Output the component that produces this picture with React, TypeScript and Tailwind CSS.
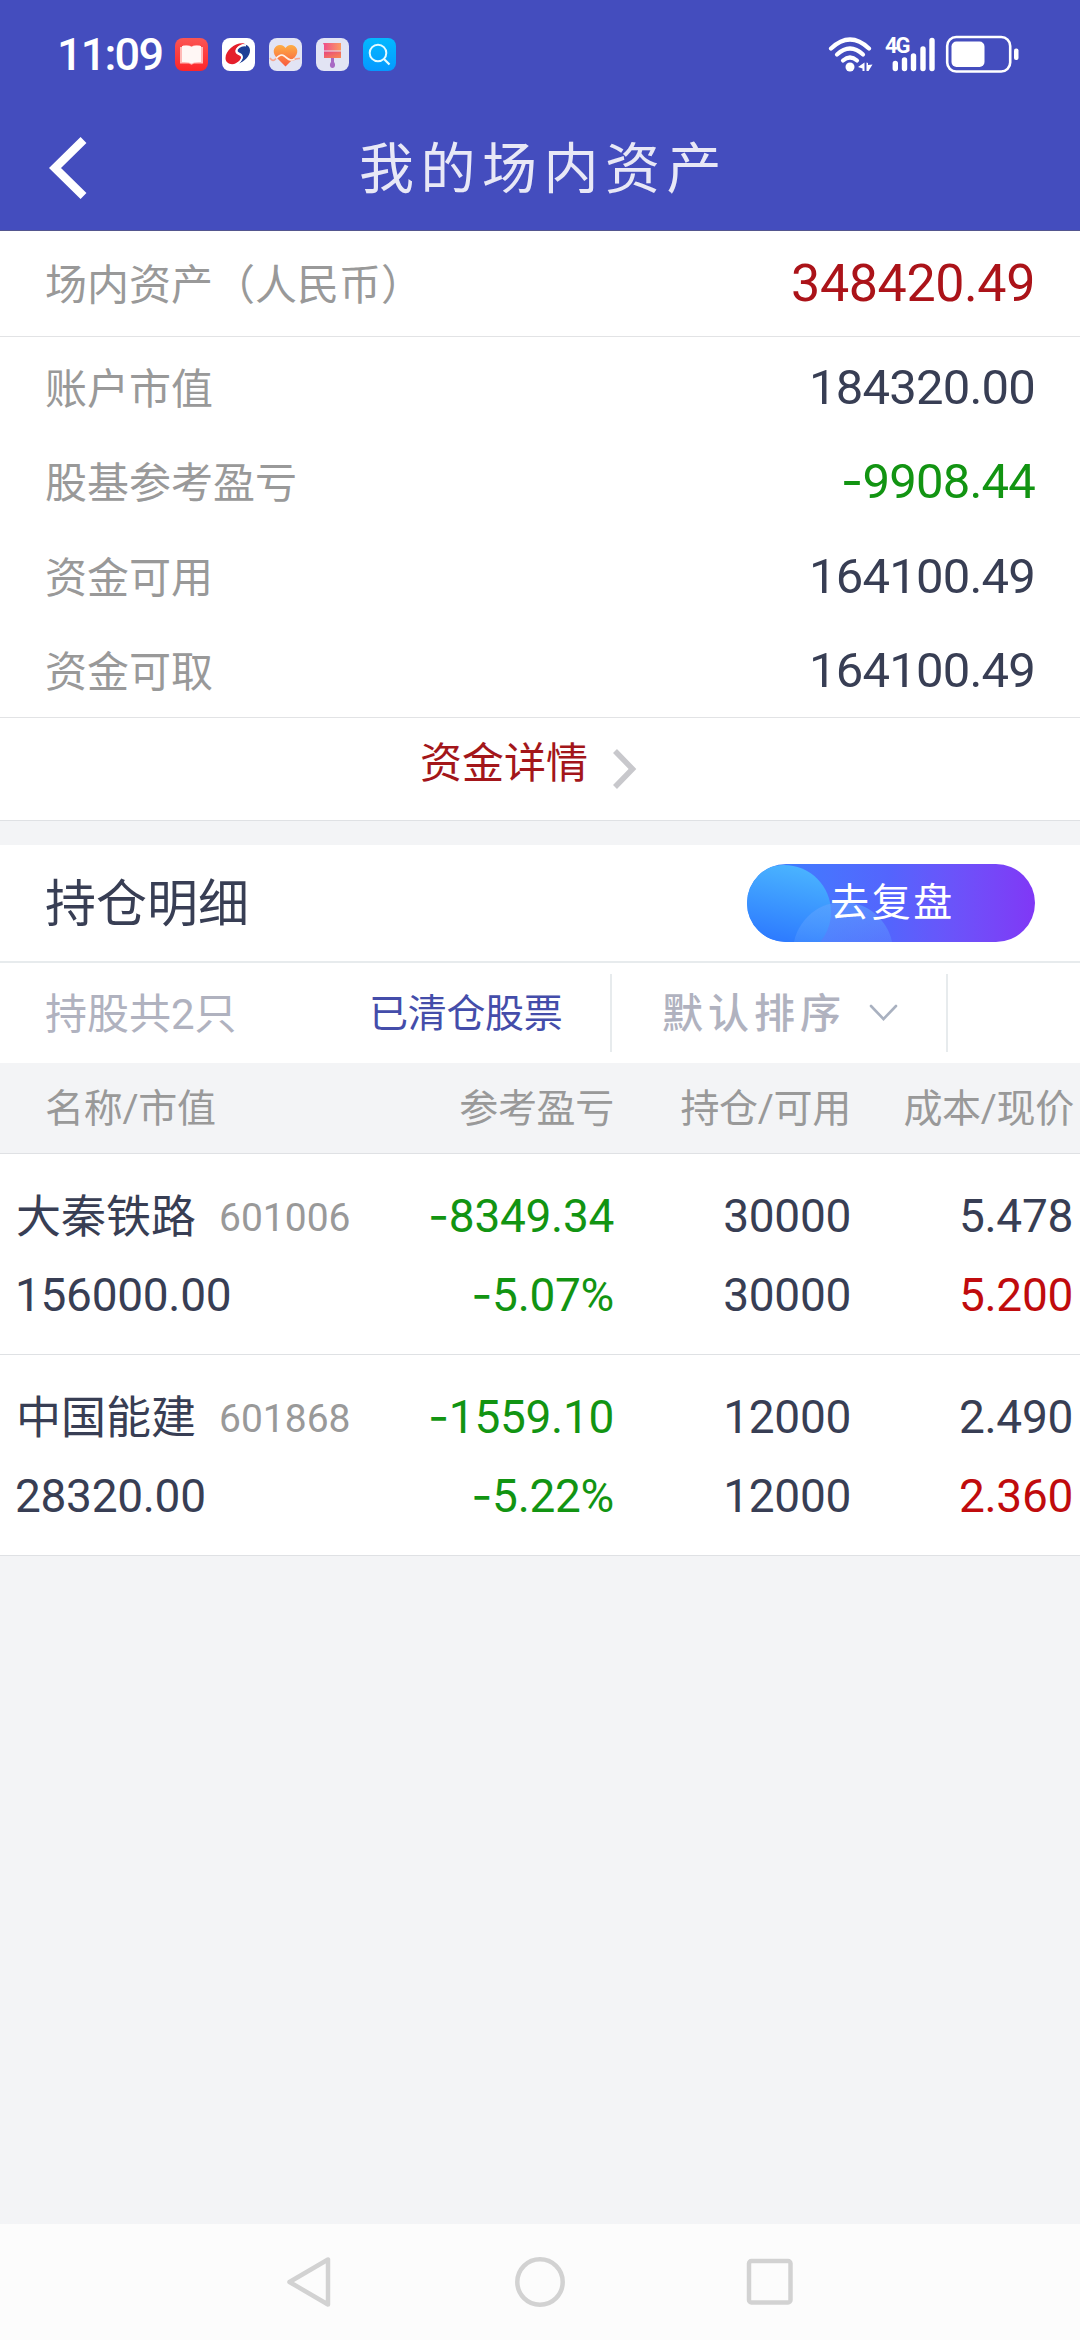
import type { ReactNode } from "react";

const funds = [
  { label: "账户市值", value: "184320.00", color: "text-[#383e54]" },
  { label: "股基参考盈亏", value: "-9908.44", color: "text-[#129412]" },
  { label: "资金可用", value: "164100.49", color: "text-[#383e54]" },
  { label: "资金可取", value: "164100.49", color: "text-[#383e54]" },
];

const stocks = [
  {
    name: "大秦铁路",
    code: "601006",
    marketValue: "156000.00",
    profit: "-8349.34",
    rate: "-5.07%",
    hold: "30000",
    available: "30000",
    cost: "5.478",
    price: "5.200",
  },
  {
    name: "中国能建",
    code: "601868",
    marketValue: "28320.00",
    profit: "-1559.10",
    rate: "-5.22%",
    hold: "12000",
    available: "12000",
    cost: "2.490",
    price: "2.360",
  },
];

// Roboto's hyphen is too short for a minus sign, Inter has a wider one
function Num({ value }: { value: string }) {
  if (!value.startsWith("-")) return <>{value}</>;
  return (
    <>
      <span className="font-['Inter'] leading-none">-</span>
      {value.slice(1)}
    </>
  );
}

function AppIcon({ children }: { children: ReactNode }) {
  return (
    <svg className="size-[33px]" viewBox="0 0 33 33">
      {children}
    </svg>
  );
}

function StatusBar() {
  return (
    <div className="flex h-[108px] items-center pl-[57px] pr-[61px] text-white">
      <span className="w-[118px] text-[45px] leading-none font-medium tracking-[-1.8px]">11:09</span>
      <div className="flex gap-[14px]">
        <AppIcon>
          <defs>
            <linearGradient id="book" x1="0" y1="0" x2="0" y2="1">
              <stop offset="0" stopColor="#fb5553" />
              <stop offset="1" stopColor="#fd2529" />
            </linearGradient>
          </defs>
          <rect width="33" height="33" rx="8" fill="url(#book)" />
          <path d="M5 9h3v-1.500q6-.8 8.500 1q2.500-1.800 8.500-1V9h3v16.500H19l-2.500 1.300-2.500-1.300H5z" fill="#ffb9b6" />
          <path d="M7 8q7-1 9.500 1Q19 7 26 8v16q-7-.5-9.500 1.500Q14 23.500 7 24z" fill="#fff7f5" />
        </AppIcon>
        <AppIcon>
          <rect width="33" height="33" rx="8" fill="#fff" />
          <path d="M23 5.500C14 3.500 3.500 12 3.500 20c0 7 9 8 14 3 3-3 2-5-1-6-4-1.500-4-5-1-8 2-2 4.500-3 7.500-3.500z" fill="#e51f2b" />
          <path d="M17 9c4-4 11-2.500 11 3.500 0 6-6 11-11 13 4-4 5-7.500 1-9.500-4-1.500-4-4.500-1-7z" fill="#1f3f96" />
          <path d="M24 7.500c-6-1-10.500 4-9 6.500 1 2 5 1.500 5 5 0 3-3 6-6 7" fill="none" stroke="#fff" strokeWidth="1.800" />
        </AppIcon>
        <AppIcon>
          <defs>
            <linearGradient id="heart" x1="0" y1="0" x2="0" y2="1">
              <stop offset="0" stopColor="#fdae45" />
              <stop offset="1" stopColor="#f9593f" />
            </linearGradient>
          </defs>
          <rect width="33" height="33" rx="8" fill="#e2e4f4" />
          <path d="M16.500 28.500 7 19C2 13 6 7 11 7c3 0 4.500 1.500 5.500 3C17.500 8.500 19 7 22 7c5 0 9 6 4 12z" fill="url(#heart)" />
          <path d="M1 20c2 3 4 3 5.500 1 3-3 5-5 8-3.500 3 1.500 4 4.500 7.500 4.500 4 0 4-2 9-1.500" fill="none" stroke="#f6a58f" strokeWidth="1.600" />
          <path d="M7 20.500c3-3 5-4.500 7.500-3 3 1.500 4 4.500 7.500 4.500 1.500 0 2.500-.5 3.500-1" fill="none" stroke="#fff1e6" strokeWidth="1.600" />
        </AppIcon>
        <AppIcon>
          <defs>
            <linearGradient id="brush" x1="0" y1="0" x2="1" y2="1">
              <stop offset="0" stopColor="#e8457f" />
              <stop offset="1" stopColor="#f98a4f" />
            </linearGradient>
            <linearGradient id="brushHead" x1="0" y1="0" x2="1" y2="0">
              <stop offset="0" stopColor="#ee4c8c" />
              <stop offset="1" stopColor="#fb9b62" />
            </linearGradient>
          </defs>
          <rect width="33" height="33" rx="8" fill="#e2e4f4" />
          <path d="M7 5h18v7.500H8V7z" fill="url(#brushHead)" />
          <path d="M8 13.500h17V20H8z" fill="url(#brush)" />
          <path d="M15 20h3v4c2 2.500 1 6-1.500 6S13 26.500 15 24z" fill="#a869c4" />
        </AppIcon>
        <AppIcon>
          <defs>
            <linearGradient id="search" x1="0" y1="0" x2="0" y2="1">
              <stop offset="0" stopColor="#03b9ff" />
              <stop offset="1" stopColor="#0599ff" />
            </linearGradient>
          </defs>
          <rect width="33" height="33" rx="8" fill="url(#search)" />
          <circle cx="15" cy="15" r="8.300" fill="none" stroke="#e4fbff" strokeWidth="2" />
          <path d="m21 21 5.500 5.500" stroke="#e4fbff" strokeWidth="2.200" />
        </AppIcon>
      </div>
      <div className="ml-auto flex items-center">
        <svg className="h-[36px] w-[46px]" viewBox="0 0 46 36" fill="none" stroke="#fff" strokeWidth="4.200" strokeLinecap="round">
          <path d="M4 12.500Q23 -5.500 42 12.500" />
          <path d="M10 18.500Q23 6.500 36 18.500" />
          <path d="M16 24.500Q23 18.500 30 24.500" />
          <circle cx="23" cy="31" r="4.500" fill="#fff" stroke="none" />
          <path d="M37.500 26.500v8.500h-2v-2.500l-4.500-1.500zM39.500 26.500l1.500.5v2l4.500-.5-4 6.500h-2z" fill="#fff" stroke="none" />
        </svg>
        <div className="relative ml-[10px] h-[36px] w-[52px]">
          <svg className="size-full" viewBox="0 0 52 36" stroke="#fff" strokeWidth="5.400" strokeLinecap="round">
            <path d="M12.300 27.500v5M21.500 24v8.500M30.500 20v12.500M40 13v19.500M49 4.500v28" />
          </svg>
          <span className="absolute top-0 left-[2px] text-[22px] leading-[20px] font-bold tracking-[-2px]">4G</span>
        </div>
        <svg className="ml-[10px] h-[38px] w-[74px]" viewBox="0 0 74 38" fill="none">
          <rect x="2.200" y="2" width="63" height="34.500" rx="9" stroke="#fff" strokeWidth="2.600" />
          <rect x="6.500" y="6.500" width="33" height="25.500" rx="5" fill="#fff" />
          <rect x="69" y="13.500" width="4.500" height="11.500" rx="2" fill="#fff" />
        </svg>
      </div>
    </div>
  );
}

function StockRow({ stock }: { stock: (typeof stocks)[number] }) {
  return (
    <div className="grid h-[201px] grid-cols-[400px_214px_237px_222px] content-center gap-y-[18px] border-b border-[#dfe1e4] bg-white pt-[3px] text-right text-[46px] leading-[61px] tracking-[-0.3px] text-[#383e54]">
      <div className="flex h-[61px] items-center pl-[16px]">
        <span className="pt-[2px] text-[45px] tracking-normal">{stock.name}</span>
        <span className="ml-[23px] pt-[4px] text-[39px] tracking-normal text-[#999]">{stock.code}</span>
      </div>
      <div className="h-[61px] text-[#129412]"><Num value={stock.profit} /></div>
      <div className="h-[61px]">{stock.hold}</div>
      <div className="h-[61px]">{stock.cost}</div>
      <div className="h-[61px] pl-[15px] text-left">{stock.marketValue}</div>
      <div className="h-[61px] text-[#129412]"><Num value={stock.rate} /></div>
      <div className="h-[61px]">{stock.available}</div>
      <div className="h-[61px] text-[#c00b0d]">{stock.price}</div>
    </div>
  );
}

export default function App() {
  return (
    <div className="flex h-[2340px] w-[1080px] flex-col overflow-hidden bg-[#f3f4f6] font-['Roboto','Noto_Sans_CJK_SC',sans-serif] whitespace-nowrap">
      <header className="h-[231px] border-b border-[#54568f] bg-[#444dbe]">
        <StatusBar />
        <div className="grid h-[120px] grid-cols-[120px_1fr_120px] items-center">
          <svg className="ml-[46px] h-[64px] w-[44px]" viewBox="0 0 44 64" fill="none" stroke="#fff" strokeWidth="8.400">
            <path d="M37.500 4 9 32l28.500 28" />
          </svg>
          <h1 className="pt-[3px] pl-[7px] text-center text-[55px] leading-none tracking-[6.500px] text-[#e8e8f6]">我的场内资产</h1>
        </div>
      </header>

      <section className="bg-white">
        <div className="flex h-[106px] items-center justify-between border-b border-[#e2e3e5] px-[45px]">
          <span className="pt-[3px] text-[42px] text-[#999]">场内资产（人民币）</span>
          <span className="text-[52px] tracking-[-0.4px] text-[#ab1319]">348420.49</span>
        </div>
        <div className="flex h-[381px] flex-col border-b border-[#e2e3e5] px-[45px] pt-[2px]">
          {funds.map((item) => (
            <div key={item.label} className="flex h-[95px] items-center justify-between">
              <span className="pt-[6px] text-[42px] text-[#999]">{item.label}</span>
              <span className={`pt-[2px] text-[49px] tracking-[-0.8px] ${item.color}`}><Num value={item.value} /></span>
            </div>
          ))}
        </div>
        <div className="flex h-[103px] items-center border-b border-[#dfe1e4] pl-[420px]">
          <span className="pb-[11px] text-[42px] text-[#a3161a]">资金详情</span>
          <svg className="ml-[22px] h-[42px] w-[28px]" viewBox="0 0 28 42" fill="none" stroke="#c8c8cc" strokeWidth="5.500">
            <path d="M5 3 22.500 21 5 39" />
          </svg>
        </div>
      </section>

      <section className="mt-[24px] bg-white">
        <div className="flex h-[118px] items-center justify-between border-b-2 border-[#e7ebed] px-[45px]">
          <h2 className="pt-[3px] text-[51px] leading-none text-[#383e54]">持仓明细</h2>
          <button className="relative h-[78px] w-[288px] overflow-hidden rounded-full bg-linear-to-r from-[#3384ff] via-[#5464fd] to-[#8037f6]">
            <svg className="absolute inset-0 size-full" viewBox="0 0 288 78">
              <defs>
                <linearGradient id="bubbleA" x1="0.6" y1="0" x2="0.4" y2="1">
                  <stop offset="0" stopColor="#4ab4ff" />
                  <stop offset="0.85" stopColor="#2c78ff" />
                </linearGradient>
                <linearGradient id="bubbleB" x1="0" y1="0" x2="0" y2="1">
                  <stop offset="0" stopColor="#62a4ff" stopOpacity="0.6" />
                  <stop offset="0.5" stopColor="#62a4ff" stopOpacity="0.2" />
                </linearGradient>
              </defs>
              <circle cx="37" cy="48" r="47" fill="url(#bubbleA)" />
              <circle cx="96" cy="88" r="50" fill="url(#bubbleB)" />
            </svg>
            <span className="relative pl-[3px] text-[39px] leading-none tracking-[2.700px] text-white">去复盘</span>
          </button>
        </div>

        <div className="flex h-[100px] items-center">
          <span className="w-[369px] pt-[3px] pl-[45px] text-[42px] text-[#b0b2bf]">持股共2只</span>
          <span className="w-[241px] pt-[3px] text-[39px] tracking-[-0.3px] text-[#444daa]">已清仓股票</span>
          <div className="flex h-[78px] w-[338px] items-center border-x-2 border-[#e7ebed] pl-[50px]">
            <span className="pt-[4px] text-[41px] font-medium tracking-[5px] text-[#b0b2bf]">默认排序</span>
            <svg className="ml-[21px] h-[20px] w-[32px]" viewBox="0 0 32 20" fill="none" stroke="#a9b1c0" strokeWidth="2.600" strokeLinecap="round">
              <path d="M4 3l12.500 13L29 3" />
            </svg>
          </div>
        </div>
      </section>

      <section>
        <div className="grid h-[91px] grid-cols-[400px_214px_237px_223px] items-center border-b border-[#dfe1e4] pt-[2px] text-right text-[39px] tracking-[-0.3px] text-[#999]">
          <span className="pl-[45px] text-left">名称/市值</span>
          <span>参考盈亏</span>
          <span>持仓/可用</span>
          <span>成本/现价</span>
        </div>
        {stocks.map((stock) => (
          <StockRow key={stock.code} stock={stock} />
        ))}
      </section>

      <nav className="mt-auto flex h-[116px] items-center justify-center gap-[179px] bg-[#fcfcfc]">
        <svg className="size-[52px]" viewBox="0 0 52 52" fill="none" stroke="#d2d2d2" strokeWidth="4.500" strokeLinejoin="round">
          <path d="M45 3.500v45L6.500 26z" />
        </svg>
        <svg className="size-[52px]" viewBox="0 0 52 52" fill="none" stroke="#d2d2d2" strokeWidth="4.500">
          <circle cx="26" cy="26" r="22.700" />
        </svg>
        <svg className="size-[52px]" viewBox="0 0 52 52" fill="none" stroke="#d2d2d2" strokeWidth="4.500">
          <rect x="4" y="5" width="41.500" height="41.500" rx="2.500" />
        </svg>
      </nav>
    </div>
  );
}
